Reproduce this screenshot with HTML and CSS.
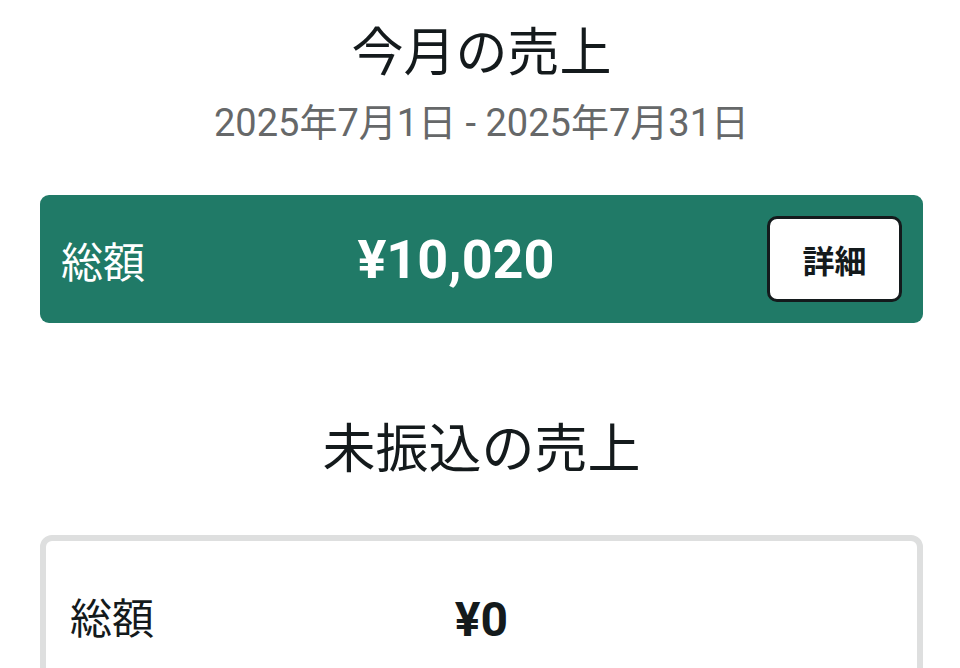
FILE: index.html
```html
<!DOCTYPE html>
<html lang="ja">
<head>
    <meta charset="UTF-8">
    <meta name="viewport" content="width=device-width, initial-scale=1.0">
    <title>売上</title>
    <link rel="stylesheet" href="styles.css">
</head>
<body>
    <div class="container">
        <h1 class="title">今月の売上</h1>
        <div class="period">2025年7月1日 - 2025年7月31日</div>

        <div class="total-card">
            <span class="label">総額</span>
            <span class="amount">¥10,020</span>
            <button class="detail-btn">詳細</button>
        </div>

        <h1 class="title title-unpaid">未振込の売上</h1>

        <div class="unpaid-card">
            <div class="unpaid-row">
                <span class="label">総額</span>
                <span class="amount">¥0</span>
                <span></span>
            </div>
        </div>
    </div>
</body>
</html>
```

FILE: styles.css
```css
body {
    margin: 0;
    font-family: Roboto, "Noto Sans CJK JP", sans-serif;
    background-color: #ffffff;
    color: #141a1c;
}

.container {
    padding: 22px 37px 0 40px;
}

.title {
    margin: 0;
    font-size: 52px;
    font-weight: 400;
    line-height: 64px;
    text-align: center;
}

.period {
    margin-top: 13px;
    font-size: 38px;
    line-height: 48px;
    color: #666869;
    text-align: center;
}

.total-card {
    display: flex;
    align-items: center;
    margin-top: 48px;
    padding: 21px 21px 21px 21px;
    background-color: #207a67;
    border-radius: 9px;
    color: #ffffff;
}

.total-card .label {
    font-size: 42px;
}

.total-card .amount {
    flex: 1;
    text-align: center;
    font-size: 54px;
    font-weight: 700;
}

.detail-btn {
    width: 135px;
    height: 86px;
    font-family: Roboto, "Noto Sans CJK JP", sans-serif;
    font-size: 32px;
    font-weight: 700;
    color: #141a1c;
    background-color: #ffffff;
    border: 3px solid #141a1c;
    border-radius: 10px;
}

.title-unpaid {
    margin-top: 95px;
    font-size: 53px;
}

.unpaid-card {
    margin-top: 53px;
    padding: 51px 24px 60px 24px;
    border: 6px solid #dedfdf;
    border-radius: 12px;
}

.unpaid-row {
    display: grid;
    grid-template-columns: 1fr auto 1fr;
    align-items: center;
    line-height: 56px;
}

.unpaid-row .label {
    font-size: 42px;
}

.unpaid-row .amount {
    font-size: 48px;
    font-weight: 700;
}
```
